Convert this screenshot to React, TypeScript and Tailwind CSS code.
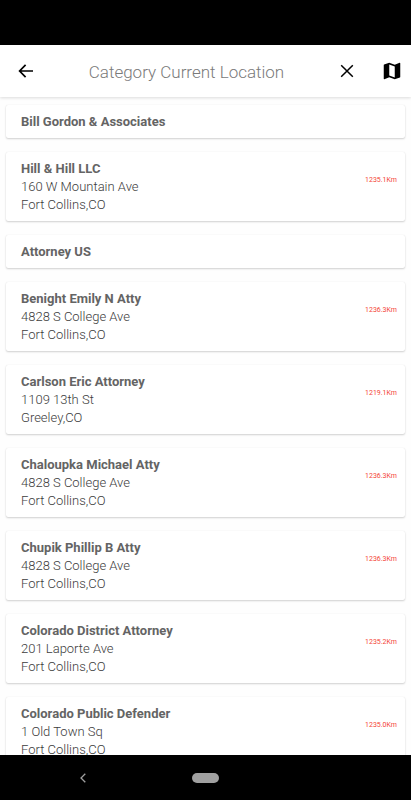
type Place = {
  name: string;
  street?: string;
  city?: string;
  distance?: string;
};

const places: Place[] = [
  { name: "Bill Gordon & Associates" },
  { name: "Hill & Hill LLC", street: "160 W Mountain Ave", city: "Fort Collins,CO", distance: "1235.1Km" },
  { name: "Attorney US" },
  { name: "Benight Emily N Atty", street: "4828 S College Ave", city: "Fort Collins,CO", distance: "1236.3Km" },
  { name: "Carlson Eric Attorney", street: "1109 13th St", city: "Greeley,CO", distance: "1219.1Km" },
  { name: "Chaloupka Michael Atty", street: "4828 S College Ave", city: "Fort Collins,CO", distance: "1236.3Km" },
  { name: "Chupik Phillip B Atty", street: "4828 S College Ave", city: "Fort Collins,CO", distance: "1236.3Km" },
  { name: "Colorado District Attorney", street: "201 Laporte Ave", city: "Fort Collins,CO", distance: "1235.2Km" },
  { name: "Colorado Public Defender", street: "1 Old Town Sq", city: "Fort Collins,CO", distance: "1235.0Km" },
];

function Header() {
  return (
    <header className="z-10 flex h-[52px] shrink-0 items-center bg-white pr-2 pl-4 shadow-[0_1px_3px_rgba(0,0,0,0.14)]">
      <button type="button" aria-label="Back" className="flex size-5 items-center justify-center">
        <svg viewBox="0 0 22 22" className="size-[22px] shrink-0 fill-none stroke-black">
          <path d="M18 11H5M10.6 4.9L4.6 11l6 6.1" strokeWidth="1.7" />
        </svg>
      </button>
      <h1 className="flex-1 pt-0.5 text-center text-[17px] leading-5 font-light text-[#7a7a7a]">
        Category Current Location
      </h1>
      <div className="flex items-center gap-6">
        <button type="button" aria-label="Clear" className="flex size-5 items-center justify-center">
          <svg viewBox="0 0 22 22" className="size-[22px] shrink-0 fill-none stroke-black">
            <path d="M5.2 5.2L16.8 16.8M16.8 5.2L5.2 16.8" strokeWidth="1.5" />
          </svg>
        </button>
        <button type="button" aria-label="Map" className="flex size-[22px] items-center justify-center">
          <svg viewBox="0 0 24 24" className="size-[22px] shrink-0 fill-black">
            <path d="M20.5 3l-.16.03L15 5.1 9 3 3.36 4.9c-.21.07-.36.25-.36.48V20.5c0 .28.22.5.5.5l.16-.03L9 18.9l6 2.1 5.64-1.9c.21-.07.36-.25.36-.48V3.5c0-.28-.22-.5-.5-.5zM15 19l-6-2.11V5l6 2.11V19z" />
          </svg>
        </button>
      </div>
    </header>
  );
}

function PlaceCard({ place }: { place: Place }) {
  return (
    <li className="flex shrink-0 items-center justify-between rounded-xs bg-white pt-2 pr-2 pb-[7px] pl-[15px] shadow-[0_1px_2px_rgba(0,0,0,0.18),0_0_1px_rgba(0,0,0,0.1)]">
      <div className="text-[13px] leading-[18px] font-light text-[#3c3c3c]">
        <h2 className="font-bold text-[#646464]">{place.name}</h2>
        {place.street && <p>{place.street}</p>}
        {place.city && <p>{place.city}</p>}
      </div>
      {place.distance && (
        <span className="pb-[15px] text-[7px] leading-3 text-[#f44336]">{place.distance}</span>
      )}
    </li>
  );
}

function NavigationBar() {
  return (
    <nav className="grid h-[45px] shrink-0 grid-cols-5 items-center justify-items-center bg-black">
      <button type="button" aria-label="System back" className="col-span-2 flex pl-0.5">
        <svg viewBox="0 0 6 10" className="h-[10px] w-[6px] fill-none stroke-[#a0a0a0]">
          <path d="M5.3 .7L1 5l4.3 4.3" strokeWidth="1.3" />
        </svg>
      </button>
      <button type="button" aria-label="Home" className="h-[10px] w-[27px] rounded-full bg-[#a0a0a0]" />
    </nav>
  );
}

export default function App() {
  return (
    <div className="flex h-screen flex-col overflow-hidden bg-[#fefefe] font-['Roboto',sans-serif]">
      <div className="h-[45px] shrink-0 bg-black" />
      <Header />
      <main className="min-h-0 flex-1 overflow-hidden">
        <ul className="flex flex-col gap-[14px] px-1.5 pt-2">
          {places.map((place) => (
            <PlaceCard key={place.name} place={place} />
          ))}
        </ul>
      </main>
      <NavigationBar />
    </div>
  );
}
